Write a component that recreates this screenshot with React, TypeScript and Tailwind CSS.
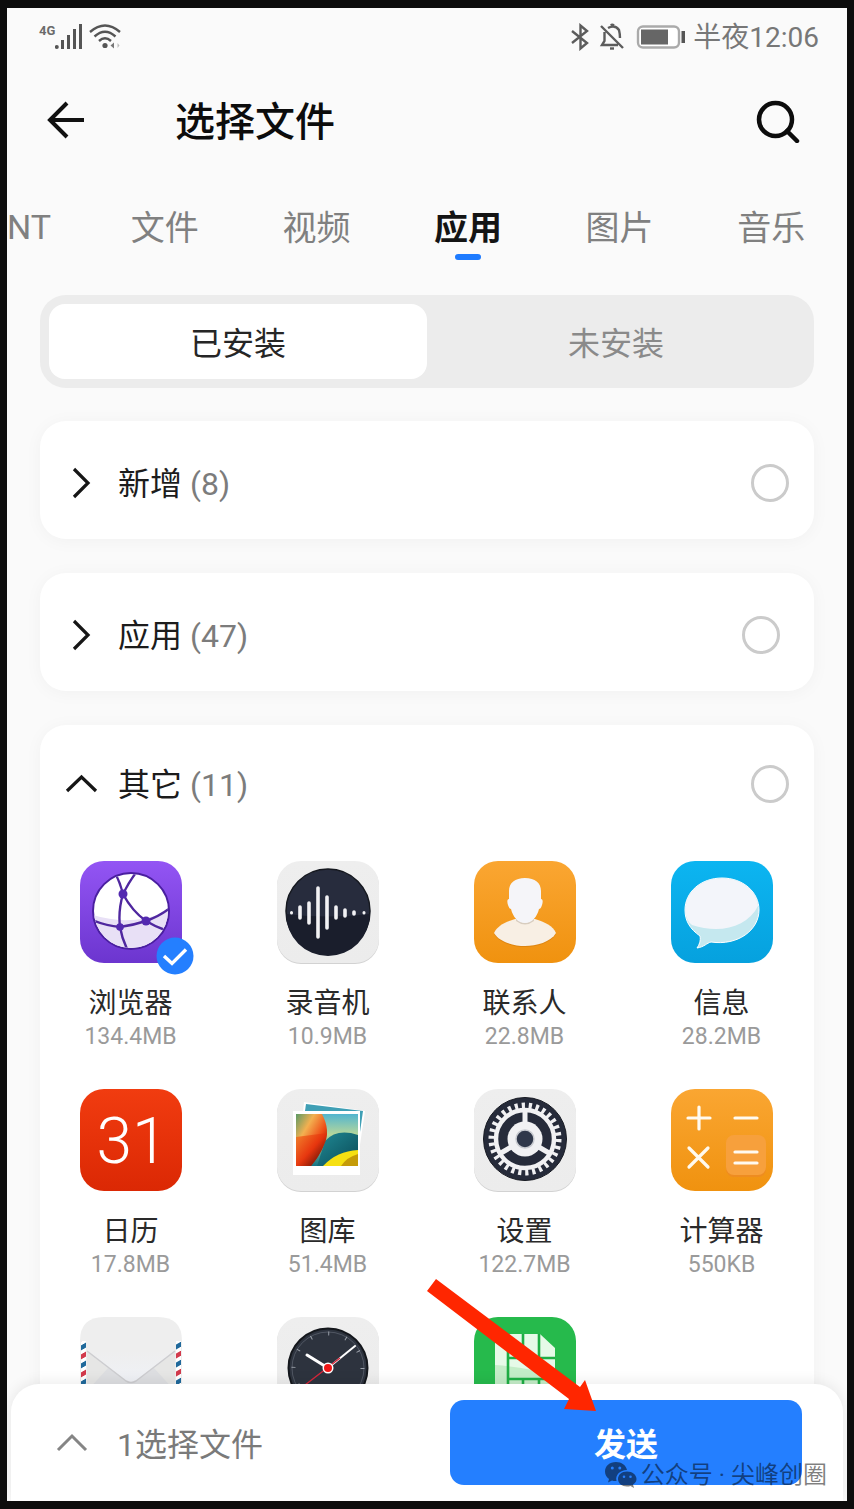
import React, { useState } from "react";

const BrowserIcon = () => (
  <svg viewBox="0 0 102 102" className="size-full overflow-visible">
    <defs>
      <linearGradient id="purple" x1="0" y1="0" x2="0" y2="1">
        <stop offset="0" stopColor="#9355f4" />
        <stop offset="1" stopColor="#6c35cf" />
      </linearGradient>
      <clipPath id="globe">
        <circle cx="51" cy="50" r="37" />
      </clipPath>
    </defs>
    <rect width="102" height="102" rx="24" fill="url(#purple)" />
    <circle cx="51" cy="50" r="38" fill="#fff" stroke="#4a1fa0" strokeWidth="2" />
    <g clipPath="url(#globe)">
      <path d="M13 54Q50 66 89 50V90H13Z" fill="#e8e0f6" />
      <g fill="none" stroke="#4f279f" strokeWidth="2.4">
        <path d="M35 12Q40 21 43 33Q49 21 55 13" />
        <path d="M43 33Q38 50 40 66Q42 78 48 90" />
        <path d="M43 33Q52 50 66 60Q76 66 85 69" />
        <path d="M12 59Q26 65 40 66Q54 64 66 60Q80 55 90 47" />
      </g>
      <g fill="#5329b0">
        <circle cx="43" cy="33" r="4.5" />
        <circle cx="66" cy="60" r="4.5" />
        <circle cx="40" cy="66" r="3.8" />
      </g>
    </g>
  </svg>
);

const LightTile = () => (
  <>
    <defs>
      <linearGradient id="light" x1="0" y1="0" x2="0" y2="1">
        <stop offset="0" stopColor="#eeeeee" />
        <stop offset="1" stopColor="#ececec" />
      </linearGradient>
    </defs>
    <rect x="0" y="1" width="102" height="102" rx="24" fill="#d2d2d2" />
    <rect width="102" height="102" rx="24" fill="url(#light)" />
  </>
);

const RecorderIcon = () => (
  <svg viewBox="0 0 102 102" className="size-full overflow-visible">
    <LightTile />
    <circle cx="51" cy="50" r="42" fill="#272c3d" stroke="#15181f" strokeWidth="1.5" />
    <path d="M9 53Q51 58 93 53A42 42 0 0 1 9 53Z" fill="#1a1e2c" />
    <g stroke="#f2f2f4" strokeWidth="3.6" strokeLinecap="round">
      <path d="M23 46V57M32 42V62M41 27V76M50 36V67M59 46V57M68 49V55M77 51V53" />
      <path d="M14.500 51.500V52M87 51.500V52" strokeWidth="3" />
    </g>
  </svg>
);

const ContactsIcon = () => (
  <svg viewBox="0 0 102 102" className="size-full">
    <defs>
      <linearGradient id="amber" x1="0" y1="0" x2="0" y2="1">
        <stop offset="0" stopColor="#faa632" />
        <stop offset="1" stopColor="#f0920f" />
      </linearGradient>
    </defs>
    <rect width="102" height="102" rx="24" fill="url(#amber)" />
    <path d="M41 59C31 62 23 66 20 73C25 82 40 86 51 86S77 82 82 73C79 66 71 62 61 59Z" fill="#c9730a" opacity=".5" />
    <path d="M41 58C31 61 23 65 20 72C25 81 40 85 51 85S77 81 82 72C79 65 71 61 61 58Z" fill="#f8efe4" />
    <path d="M42 54Q51 70 60 54V60Q51 67 42 60Z" fill="#d8cdbf" />
    <path
      d="M51 17C41 17 35 22 35 30V38C33 38 33 41 34 44C35 47 36 48 37 48C39 56 44 62 51 62S63 56 65 48C66 48 67 47 68 44C69 41 69 38 67 38V30C67 22 61 17 51 17Z"
      fill="#f5f5f9"
    />
  </svg>
);

const MessagesIcon = () => (
  <svg viewBox="0 0 102 102" className="size-full">
    <defs>
      <linearGradient id="sky" x1="0" y1="0" x2="0" y2="1">
        <stop offset="0" stopColor="#0cb5f1" />
        <stop offset="1" stopColor="#06a1de" />
      </linearGradient>
    </defs>
    <rect width="102" height="102" rx="24" fill="url(#sky)" />
    <path
      d="M51 17C30 17 14 31 14 49C14 60 19 68 29 75C30 80 28 84 26 87C33 86 36 82 40 81C67 85 88 69 88 49C88 31 72 17 51 17Z"
      fill="#c5e8ef"
      stroke="#fff"
    />
    <path d="M51 17.500C30 17.500 14.500 31 14.500 49C14.500 56 17 61 21 64C48 73 76 67 87 45C85 28 70 17.500 51 17.500Z" fill="#f3f5fa" />
  </svg>
);

const CalendarIcon = () => (
  <svg viewBox="0 0 102 102" className="size-full">
    <defs>
      <linearGradient id="red" x1="0" y1="0" x2="0" y2="1">
        <stop offset="0" stopColor="#f13c10" />
        <stop offset="1" stopColor="#db2804" />
      </linearGradient>
    </defs>
    <rect width="102" height="102" rx="24" fill="url(#red)" />
    <text x="52" y="74" textAnchor="middle" fontFamily="Roboto, sans-serif" fontWeight="300" fontSize="64" fill="#fff">
      31
    </text>
  </svg>
);

const GalleryIcon = () => (
  <svg viewBox="0 0 102 102" className="size-full overflow-visible">
    <defs>
      <linearGradient id="flame" x1="0" y1="0" x2="1" y2="1">
        <stop offset="0" stopColor="#5a9a66" />
        <stop offset=".3" stopColor="#f3b050" />
        <stop offset=".6" stopColor="#ee4a15" />
        <stop offset="1" stopColor="#3c0505" />
      </linearGradient>
      <linearGradient id="ember" x1="0" y1="0" x2="1" y2="1">
        <stop offset="0" stopColor="#f2701f" />
        <stop offset=".5" stopColor="#e5300c" />
        <stop offset="1" stopColor="#2a0404" />
      </linearGradient>
      <linearGradient id="haze" x1="0" y1="0" x2="0" y2="1">
        <stop offset="0" stopColor="#52b5cf" />
        <stop offset=".4" stopColor="#b7d79a" />
        <stop offset="1" stopColor="#147585" />
      </linearGradient>
      <linearGradient id="leaf" x1="0" y1="0" x2="1" y2="1">
        <stop offset="0" stopColor="#208a95" />
        <stop offset="1" stopColor="#0a4a57" />
      </linearGradient>
      <clipPath id="photo">
        <rect x="19" y="25" width="62" height="52" />
      </clipPath>
    </defs>
    <LightTile />
    <path d="M27 13L88 22L80 76L22 66Z" fill="#fff" />
    <path d="M29 15L86 22L80 64L24 50Z" fill="#3f9fb5" />
    <path d="M16 22H83V86H16Z" fill="#fff" />
    <g clipPath="url(#photo)">
      <path d="M19 25H81V77H19Z" fill="url(#haze)" />
      <path d="M48 52Q60 39 81 46V77H40Z" fill="url(#leaf)" />
      <path d="M19 25H45Q54 42 47 56Q42 68 34 77H19Z" fill="url(#flame)" />
      <path d="M19 48L50 44Q48 60 34 77H19Z" fill="url(#ember)" opacity=".8" />
      <path d="M46 77Q60 62 81 61V77Z" fill="#f6e012" />
      <path d="M64 77Q70 68 81 65V77Z" fill="#c59b08" />
    </g>
  </svg>
);

const SettingsIcon = () => (
  <svg viewBox="0 0 102 102" className="size-full overflow-visible">
    <LightTile />
    <circle cx="51" cy="50" r="41.500" fill="#262b3a" stroke="#171a22" strokeWidth="1" />
    <g fill="none" stroke="#f1f1f3">
      <circle cx="51" cy="50" r="33.500" strokeWidth="6" strokeDasharray="3.2 3.816" />
      <circle cx="51" cy="50" r="29" strokeWidth="4.500" />
      <path d="M51 50V22M51 50L75 64M51 50L27 64" strokeWidth="5" />
    </g>
    <circle cx="51" cy="50" r="17.500" fill="#f1f1f3" />
    <circle cx="51" cy="50" r="9" fill="#30384a" stroke="#c9cbd0" strokeWidth="1.5" />
  </svg>
);

const CalculatorIcon = () => (
  <svg viewBox="0 0 102 102" className="size-full">
    <rect width="102" height="102" rx="24" fill="url(#amber)" />
    <rect x="55" y="48" width="40" height="40" rx="8" fill="#ee8c20" />
    <rect x="55" y="46" width="40" height="40" rx="8" fill="#f7a03c" />
    <path
      d="M28 18V40M17 29H39M64 29H86M18 59L37 78M37 59L18 78M64 63H86M64 74H86"
      stroke="#fffaf0"
      strokeWidth="3.2"
      strokeLinecap="round"
    />
  </svg>
);

const MailIcon = () => (
  <svg viewBox="0 0 102 102" className="size-full">
    <defs>
      <pattern id="stripes" width="8" height="18" patternUnits="userSpaceOnUse" patternTransform="skewY(-30)">
        <rect width="8" height="18" fill="#fff" />
        <rect width="8" height="5" y="2" fill="#d23a4c" />
        <rect width="8" height="5" y="11" fill="#20699b" />
      </pattern>
      <linearGradient id="flap" x1="0" y1="0" x2="0" y2="1">
        <stop offset="0" stopColor="#eeeeee" />
        <stop offset="1" stopColor="#eff1f6" />
      </linearGradient>
    </defs>
    <path d="M0 24Q0 0 24 0H78Q102 0 102 24V102H0Z" fill="#eeeeee" />
    <path d="M1 24H6V102H1ZM96 24H101V102H96Z" fill="url(#stripes)" />
    <path d="M7 34V102H95V34L51 68Z" fill="#e6e6e5" />
    <path d="M7 74L29 50L51 66L73 50L95 74V102H7Z" fill="#dddee1" />
    <path d="M7 34L46 64Q51 67 56 64L95 34Z" fill="url(#flap)" />
    <path d="M7 34L46 64Q51 67 56 64L95 34" fill="none" stroke="#cdcdd0" strokeWidth="1.5" />
  </svg>
);

const ClockIcon = () => (
  <svg viewBox="0 0 102 102" className="size-full">
    <LightTile />
    <circle cx="51" cy="51" r="39.500" fill="#2d333e" stroke="#14171c" strokeWidth="2" />
    <circle cx="51" cy="51" r="36" fill="none" stroke="#59606c" strokeWidth=".8" />
    <circle cx="51" cy="51" r="34.500" fill="none" stroke="#9ba1aa" strokeWidth="4" strokeDasharray="1 17.064" />
    <path d="M51 51L30 38" stroke="#fff" strokeWidth="3" strokeLinecap="round" />
    <path d="M51 51L78 29" stroke="#fff" strokeWidth="2" strokeLinecap="round" />
    <path d="M63 41L28 68" stroke="#d6263a" strokeWidth="1.4" />
    <circle cx="51" cy="51" r="5.500" fill="#fff" />
    <circle cx="51" cy="51" r="4" fill="#f01616" />
  </svg>
);

const SimIcon = () => (
  <svg viewBox="0 0 102 102" className="size-full">
    <rect width="102" height="102" rx="24" fill="#26ba4c" />
    <path d="M21 17H66L81 31V90H21Z" fill="#e6fae8" />
    <path d="M21 48Q50 50 81 58V90H21Z" fill="#c4edc8" />
    <path d="M34 17V90M49 17V41M65 17V41M34 41H81M34 62H81M49 62V90M65 62V90" fill="none" stroke="#1fae45" strokeWidth="2.6" />
  </svg>
);

const tabs = ["文件", "视频", "应用", "图片", "音乐"];

const apps = [
  { name: "浏览器", size: "134.4MB", Icon: BrowserIcon },
  { name: "录音机", size: "10.9MB", Icon: RecorderIcon },
  { name: "联系人", size: "22.8MB", Icon: ContactsIcon },
  { name: "信息", size: "28.2MB", Icon: MessagesIcon },
  { name: "日历", size: "17.8MB", Icon: CalendarIcon },
  { name: "图库", size: "51.4MB", Icon: GalleryIcon },
  { name: "设置", size: "122.7MB", Icon: SettingsIcon },
  { name: "计算器", size: "550KB", Icon: CalculatorIcon },
];

const moreApps = [
  { name: "邮件", Icon: MailIcon },
  { name: "时钟", Icon: ClockIcon },
  { name: "SIM", Icon: SimIcon },
];

const StatusBar = () => (
  <div className="flex h-14 items-center justify-between pl-8 pr-7 pt-0.5 text-[#6b6b6b]">
    <div className="flex items-center gap-1">
      <div className="flex items-start">
        <span className="text-[13px] font-bold leading-4">4G</span>
        <svg viewBox="0 0 30 28" className="h-7 w-[30px]" fill="#555">
          <circle cx="1.800" cy="24" r="2" />
          <path d="M6 17h3v9H6zM12 12h3v14H12zM18 6h3v20H18zM24 1h3v25H24z" />
        </svg>
      </div>
      <svg viewBox="0 0 32 28" className="h-7 w-8" fill="none" stroke="#555" strokeWidth="2.4">
        <path d="M1 9Q16-4 31 9M5.500 13.500Q16 4 26.500 13.500M10 18Q16 12.500 22 18" />
        <circle cx="16" cy="22.500" r="2.600" fill="#555" stroke="none" />
        <path d="M25 19.500V25.500L21.500 22.500Z" fill="#777" stroke="none" />
        <path d="M28.500 20L30.500 22.500L28.500 25Z" fill="#bbb" stroke="none" />
      </svg>
    </div>
    <div className="flex items-center gap-2">
      <div className="flex items-center gap-2.5">
        <svg viewBox="0 0 18 28" className="h-7 w-[18px]" fill="none" stroke="#5c5c5c" strokeWidth="2.4">
          <path d="M1 8L16 20L9.500 25.500V2.500L16 8L1 20" />
        </svg>
        <svg viewBox="0 0 26 28" className="h-7 w-[26px]" fill="none" stroke="#5c5c5c" strokeWidth="2.4">
          <path d="M2 3L24 25M5.500 9V18L3 22H19M9 5Q16 1 20 7Q21 11 21 15M12 2.500Q13 1 15 2.500" />
          <path d="M11 25.500H15" />
        </svg>
        <svg viewBox="0 0 50 28" className="h-7 w-[50px]">
          <rect x="3" y="3.500" width="41" height="21" rx="5" fill="#fff" stroke="#aaa" strokeWidth="2.4" />
          <rect x="6" y="6.500" width="27" height="15" fill="#666" />
          <rect x="46.500" y="8" width="3.500" height="12" fill="#555" />
        </svg>
      </div>
      <span className="pt-0.5 text-[28px] leading-9 text-[#777]">半夜12:06</span>
    </div>
  </div>
);

type GroupHeaderProps = { title: string; count: number; open?: boolean; inset?: boolean };

const GroupHeader = ({ title, count, open = false, inset = false }: GroupHeaderProps) => (
  <div className={`flex h-[118px] items-center pl-6 ${open ? "" : "pt-1.5"} ${inset ? "pr-[34px]" : "pr-[25px]"}`}>
    <button type="button" className="flex flex-1 items-center gap-5" aria-expanded={open}>
      <svg viewBox="0 0 34 34" className="size-[34px]" fill="none" stroke="#161616" strokeWidth="3.200">
        <path d={open ? "M3 24L17.500 10L32 24" : "M10 3L24 17L10 31"} />
      </svg>
      <span className="pt-0.5 text-[32px] leading-10 text-[#1c1c1c]">
        {title} <span className="text-[#7c7c7c]">({count})</span>
      </span>
    </button>
    <input
      type="radio"
      aria-label={title}
      className="size-[38px] appearance-none rounded-full border-3 border-[#cbcbcb] bg-white"
    />
  </div>
);

const App = () => {
  const [tab, setTab] = useState("应用");
  const [installed, setInstalled] = useState(true);
  const [selected, setSelected] = useState("浏览器");

  return (
    <div className="relative flex h-screen flex-col overflow-hidden border-x-[7px] border-y-8 border-[#0d0d0d] bg-[#fafafa] font-['Roboto','Noto_Sans_CJK_SC',sans-serif]">
      <StatusBar />

      <header className="flex h-[114px] items-center pl-9 pr-[47px]">
        <button type="button" aria-label="返回">
          <svg viewBox="0 0 44 44" className="size-11" fill="none" stroke="#111" strokeWidth="4">
            <path d="M41 21H6M24 4L7 21L24 38" />
          </svg>
        </button>
        <h1 className="ml-[88px] flex-1 pt-1 text-[40px] font-medium leading-[52px] text-[#0c0c0c]">选择文件</h1>
        <button type="button" aria-label="搜索">
          <svg viewBox="0 0 44 44" className="size-11" fill="none" stroke="#0c0c0c" strokeWidth="4.500">
            <circle cx="19.500" cy="20.500" r="16.500" />
            <path d="M31 32L41 42" strokeLinecap="round" />
          </svg>
        </button>
      </header>

      <nav className="grid h-[98px] grid-cols-[82px_repeat(5,minmax(0,1fr))] text-[34px] leading-10 text-[#808080]">
        <button type="button" className="text-left">NT</button>
        {tabs.map((t) => (
          <button
            key={t}
            type="button"
            onClick={() => setTab(t)}
            className={`relative pt-0.5 ${t === tab ? "font-bold text-[#141414]" : ""}`}
          >
            {t}
            {t === tab && <span className="absolute bottom-4 left-1/2 h-1.5 w-[26px] -translate-x-1/2 rounded-full bg-[#1e7bff]" />}
          </button>
        ))}
      </nav>

      <main className="mt-[19px] flex flex-col px-[33px]">
        <div className="grid h-[93px] grid-cols-2 rounded-[26px] bg-[#ececec] p-[9px] text-[32px] leading-10">
          <button
            type="button"
            onClick={() => setInstalled(true)}
            className={`rounded-2xl pt-1 ${installed ? "bg-white text-[#262626]" : "text-[#8a8a8a]"}`}
          >
            已安装
          </button>
          <button
            type="button"
            onClick={() => setInstalled(false)}
            className={`rounded-2xl pt-1 ${installed ? "text-[#8a8a8a]" : "bg-white text-[#262626]"}`}
          >
            未安装
          </button>
        </div>

        <section className="mt-[33px] rounded-[26px] bg-white shadow-[0_2px_18px_rgba(0,0,0,0.04)]">
          <GroupHeader title="新增" count={8} />
        </section>
        <section className="mt-[34px] rounded-[26px] bg-white shadow-[0_2px_18px_rgba(0,0,0,0.04)]">
          <GroupHeader title="应用" count={47} inset />
        </section>
        <section className="mt-[34px] rounded-[26px] bg-white shadow-[0_2px_18px_rgba(0,0,0,0.04)]">
          <GroupHeader title="其它" count={11} open />
          <div className="-ml-2 -mr-1.5 grid grid-cols-4 gap-y-[37px] pt-[18px]">
            {apps.map(({ name, size, Icon }) => (
              <button key={name} type="button" onClick={() => setSelected(name)} className="flex flex-col items-center">
                <span className="relative size-[102px]">
                  <Icon />
                  {name === selected && (
                    <svg viewBox="0 0 38 38" className="absolute -bottom-3 -right-3 size-[38px]">
                      <circle cx="19" cy="19" r="18.500" fill="#247fff" />
                      <path d="M8 19L16 26.500L30 12.500" fill="none" stroke="#fff" strokeWidth="3.400" />
                    </svg>
                  )}
                </span>
                <span className="mt-[23px] text-[28px] leading-9 text-[#2a2a2a]">{name}</span>
                <span className="text-[23px] leading-[30px] text-[#9a9a9a]">{size}</span>
              </button>
            ))}
            {moreApps.map(({ name, Icon }) => (
              <button key={name} type="button" aria-label={name} className="mx-auto size-[102px]">
                <Icon />
              </button>
            ))}
          </div>
        </section>
      </main>

      <footer className="absolute inset-x-1 bottom-0 flex h-[117px] items-center rounded-t-[28px] bg-white pl-11 pr-[41px] shadow-[0_-2px_14px_rgba(0,0,0,0.08)]">
        <button type="button" className="flex flex-1 items-center gap-7 text-[32px] leading-10 text-[#7a7a7a]">
          <svg viewBox="0 0 34 34" className="size-[34px]" fill="none" stroke="#858585" strokeWidth="3">
            <path d="M3 24L17 10L31 24" />
          </svg>
          <span className="pt-1">1选择文件</span>
        </button>
        <button type="button" className="h-[85px] w-[352px] rounded-[14px] bg-[#247fff] pt-1 text-[32px] font-bold leading-10 text-white">
          发送
        </button>
      </footer>

      <svg viewBox="0 0 170 134" className="absolute bottom-[88px] left-[420px] h-[134px] w-[170px]" fill="#ff2600">
        <path d="M0 12L9 0L153 108L158 101L169 132L137 130L142 120Z" />
      </svg>

      <div className="absolute bottom-2 right-5 flex items-center gap-1 text-[24px] leading-9 text-black/50">
        <svg viewBox="0 0 32 26" className="h-[26px] w-8" fillRule="evenodd" fill="currentColor">
          <path d="M11 0C4.500 0 0 4 0 9.500C0 12.500 1.500 15 4 17L3 20.500L7 18.500Q9 19.200 11.500 19C10 13 15 8 22 8C21 3 16.500 0 11 0ZM7.300 4.500a1.500 1.500 0 1 1 0 3a1.500 1.500 0 1 1 0-3ZM14.800 4.500a1.500 1.500 0 1 1 0 3a1.500 1.500 0 1 1 0-3Z" />
          <path d="M22 9.500C16.500 9.500 13 13 13 17C13 21.500 17 24.500 22 24.500Q24 24.500 25.500 24L29 26L28 22.500C30.500 21 31.500 19 31.500 17C31.500 13 27.500 9.500 22 9.500ZM19 13.500a1.300 1.300 0 1 1 0 2.600a1.300 1.300 0 1 1 0-2.600ZM25.500 13.500a1.300 1.300 0 1 1 0 2.600a1.300 1.300 0 1 1 0-2.600Z" />
        </svg>
        <span>公众号 · 尖峰创圈</span>
      </div>
    </div>
  );
};

export default App;
